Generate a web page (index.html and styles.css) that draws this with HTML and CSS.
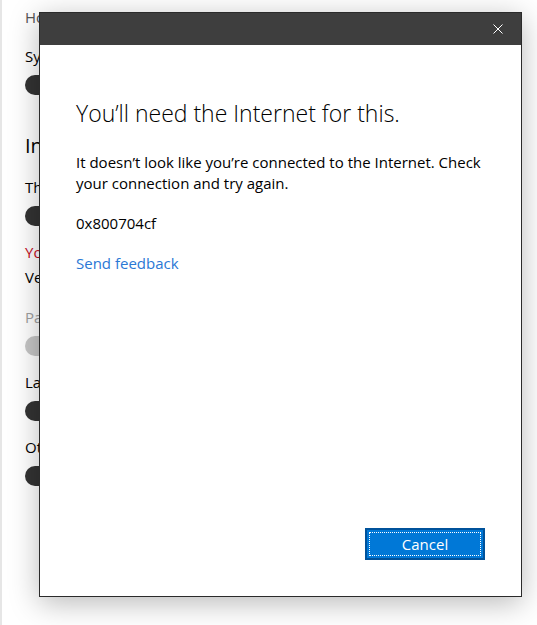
FILE: index.html
```html
<!DOCTYPE html>
<html>
<head>
  <title>Settings</title>
  <link rel="stylesheet" href="styles.css">
</head>
<body>
  <div class="settings">
    <p class="item muted">Home</p>
    <p class="item first">Sync</p>
    <div class="toggle"></div>

    <h2 class="section">Ink</h2>
    <p class="item">Then</p>
    <div class="toggle"></div>

    <p class="item warn">You</p>
    <p class="item tight">Verify</p>

    <p class="item disabled">Pause</p>
    <div class="toggle off"></div>

    <p class="item">Lang</p>
    <div class="toggle"></div>

    <p class="item">Other</p>
    <div class="toggle"></div>
  </div>

  <div class="dialog">
    <div class="titlebar">
      <span class="close">
        <svg width="10" height="10" viewBox="0 0 10 10">
          <path d="M0.5 0.5 L9.5 9.5 M9.5 0.5 L0.5 9.5" stroke="#fff" stroke-width="1"/>
        </svg>
      </span>
    </div>
    <div class="dialog-body">
      <h1>You’ll need the Internet for this.</h1>
      <p class="message">It doesn’t look like you’re connected to the Internet. Check your connection and try again.</p>
      <p class="code">0x800704cf</p>
      <a class="feedback" href="#">Send feedback</a>
      <div class="actions">
        <button type="button" class="cancel"><span>Cancel</span></button>
      </div>
    </div>
  </div>
</body>
</html>
```

FILE: styles.css
```css
body {
  margin: 0;
  height: 625px;
  overflow: hidden;
  background-color: #fff;
  font-family: "Open Sans", "Noto Sans", sans-serif;
  color: #000;
  border-left: 2px solid #e6e6e6;
  box-sizing: border-box;
  position: relative;
}

.settings {
  padding: 7px 0 0 23px;
  display: flex;
  flex-direction: column;
  align-items: flex-start;
}

.item {
  margin: 0;
  font-size: 15px;
  line-height: 20px;
  white-space: nowrap;
}

.muted {
  color: #555;
}

.first {
  margin-top: 19px;
}

.toggle {
  width: 44px;
  height: 20px;
  border-radius: 10px;
  background-color: #333;
  margin-top: 9px;
}

.toggle.off {
  background-color: #c6c6c6;
}

.section {
  margin: 38px 0 0;
  font-size: 20px;
  font-weight: normal;
  line-height: 26px;
}

.section + .item {
  margin-top: 18px;
}

.toggle + .item {
  margin-top: 16px;
}

.warn {
  color: #c50f1f;
}

.item.tight {
  margin-top: 5px;
}

.disabled {
  color: #a0a0a0;
}

.tight + .disabled {
  margin-top: 20px;
}

.dialog {
  position: absolute;
  left: 37px;
  top: 12px;
  width: 483px;
  height: 585px;
  box-sizing: border-box;
  border: 1px solid #2b2b2b;
  background-color: #fff;
  box-shadow: 0 6px 28px rgba(0, 0, 0, 0.28);
  display: flex;
  flex-direction: column;
}

.titlebar {
  height: 32px;
  background-color: #3e3e3e;
  display: flex;
  justify-content: flex-end;
  align-items: center;
  padding-right: 18px;
  flex-shrink: 0;
}

.close {
  display: flex;
}

.dialog-body {
  flex: 1;
  display: flex;
  flex-direction: column;
  align-items: flex-start;
  padding: 52px 36px 36px 36px;
}

.dialog-body h1 {
  margin: 0;
  font-size: 23px;
  font-weight: 300;
  line-height: 32px;
}

.message {
  margin: 23px 0 0;
  font-size: 15px;
  line-height: 21px;
}

.code {
  margin: 19px 0 0;
  font-size: 15px;
  line-height: 20px;
}

.feedback {
  margin-top: 20px;
  font-size: 15px;
  line-height: 20px;
  color: #2a78d5;
  text-decoration: none;
}

.actions {
  margin-top: auto;
  align-self: stretch;
  display: flex;
  justify-content: flex-end;
}

.cancel {
  width: 120px;
  height: 32px;
  padding: 2px;
  border: 2px solid #00529b;
  background-color: #0078d7;
  color: #fff;
  font-family: inherit;
  font-size: 15px;
  cursor: pointer;
  margin-right: 0;
}

.cancel span {
  display: flex;
  height: 100%;
  align-items: center;
  justify-content: center;
  border: 1px dotted #fff;
  box-sizing: border-box;
}
```
